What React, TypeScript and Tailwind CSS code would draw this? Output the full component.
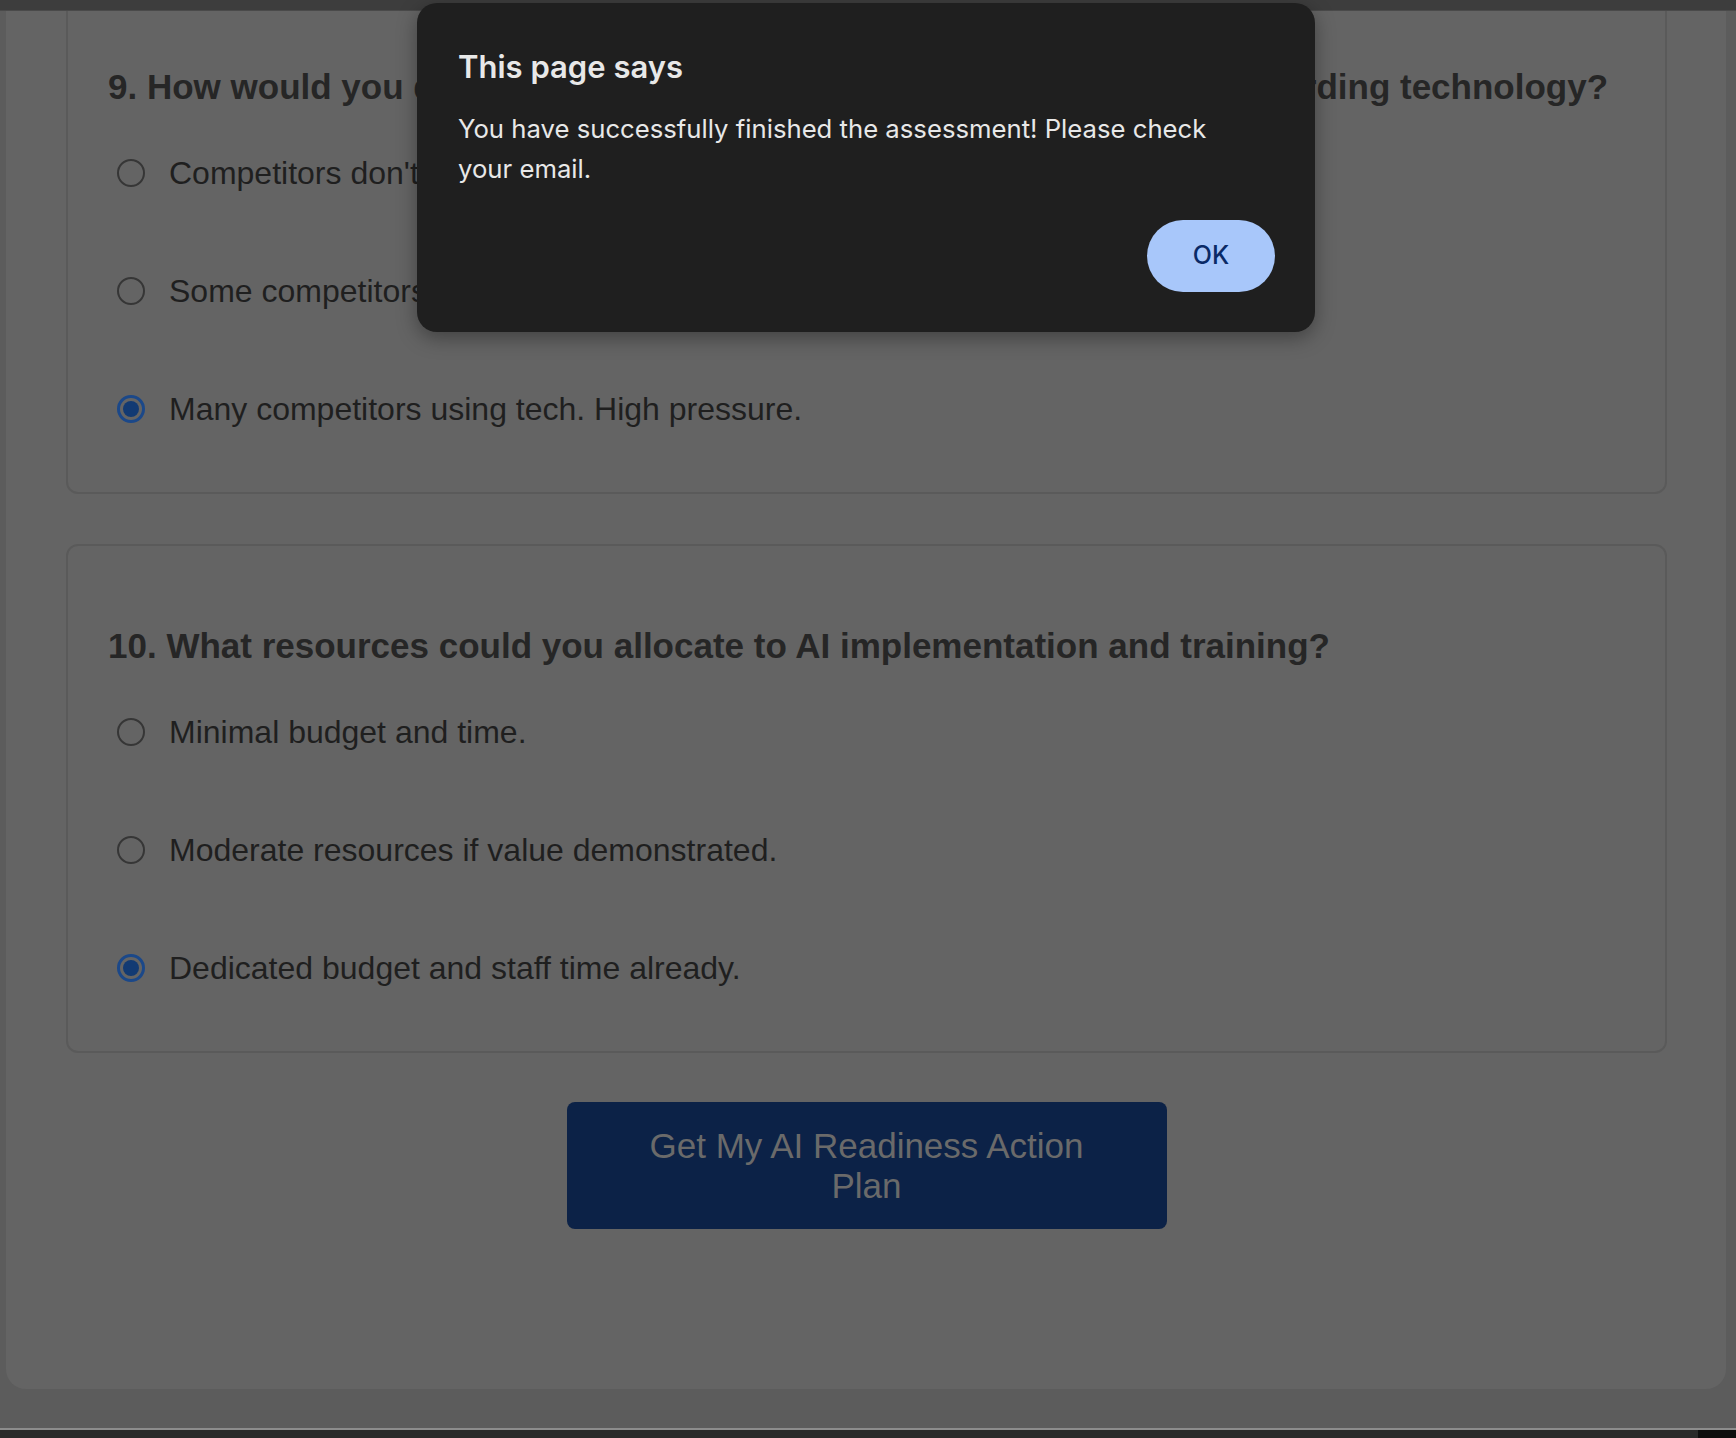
import React from "react";

interface Question {
  num: number;
  title: string;
  options: string[];
  selected: number;
}

const questions: Question[] = [
  {
    num: 9,
    title: "How would you describe your company's competitive landscape regarding technology?",
    options: [
      "Competitors don't use much technology. Low pressure.",
      "Some competitors adopting tech. Moderate pressure.",
      "Many competitors using tech. High pressure.",
    ],
    selected: 2,
  },
  {
    num: 10,
    title: "What resources could you allocate to AI implementation and training?",
    options: [
      "Minimal budget and time.",
      "Moderate resources if value demonstrated.",
      "Dedicated budget and staff time already.",
    ],
    selected: 2,
  },
];

function Radio({ checked }: { checked: boolean }) {
  if (checked) {
    return (
      <span className="ml-[9px] flex h-[28px] w-[28px] shrink-0 items-center justify-center rounded-full border-[3px] border-[#1b4889]">
        <span className="h-[16px] w-[16px] rounded-full bg-[#123a73]" />
      </span>
    );
  }
  return <span className="ml-[9px] h-[28px] w-[28px] shrink-0 rounded-full border-2 border-[#363636]" />;
}

function QuestionCard({ q, className }: { q: Question; className?: string }) {
  return (
    <div className={`rounded-[12px] border-2 border-[#5a5a5a] px-[40px] pb-[24px] ${className ?? ""}`}>
      <h3 className="whitespace-nowrap text-[35px] font-bold leading-[40px] text-[#262626]">
        {q.num}. {q.title}
      </h3>
      <div className="mt-[7px]">
        {q.options.map((opt, i) => (
          <label key={i} className="flex h-[118px] items-center gap-[24px]">
            <Radio checked={i === q.selected} />
            <span className="whitespace-nowrap text-[32px] leading-[37px] text-[#1f1f1f]">{opt}</span>
          </label>
        ))}
      </div>
    </div>
  );
}

export default function App() {
  return (
    <div className="relative h-[1438px] w-[1736px] overflow-hidden bg-[#5c5c5c] font-['Liberation_Sans',Arial,sans-serif]">
      {/* browser tab strip */}
      <div className="relative z-10 h-[10px] bg-[#3d3d3d]" />
      <div className="relative z-10 h-px bg-[#4a4a4a]" />

      {/* page panel, scrolled so its top is out of view */}
      <div className="-mt-[11px] ml-[6px] flex h-[1389px] w-[1720px] flex-col rounded-b-[20px] bg-[#646464] pl-[60px] pr-[59px]">
        <QuestionCard q={questions[0]} className="-mt-[15px] pt-[80px]" />
        <QuestionCard q={questions[1]} className="mt-[50px] pt-[80px]" />
        <div className="mt-[49px] flex justify-center">
          <button className="flex h-[127px] w-[600px] items-center justify-center rounded-[8px] bg-[#0c2247] px-[50px] text-center text-[35px] leading-[40px] text-[#6a6a6a]">
            Get My AI Readiness Action Plan
          </button>
        </div>
      </div>

      {/* window bottom edge */}
      <div className="mt-[39px] h-[2px] bg-[#8c8c8c]" />
      <div className="flex h-[8px]">
        <div className="flex-1 bg-[#2a2a2a]" />
        <div className="w-[38px] bg-[#0e0e0e]" />
      </div>

      {/* alert dialog */}
      <div className="absolute left-[417px] top-[3px] z-20 h-[329px] w-[898px] rounded-[20px] bg-[#1f1f1f] pl-[41px] pr-[40px] pt-[46px] font-['Inter',sans-serif] shadow-[0_6px_20px_rgba(0,0,0,0.35)]">
        <div className="text-[31px] font-semibold leading-[36px] text-[#e8e8e8]">This page says</div>
        <p className="mt-[24px] max-w-[770px] text-[25.7px] leading-[40px] text-[#e8e8e8]">
          You have successfully finished the assessment! Please check your email.
        </p>
        <div className="mt-[31px] flex justify-end">
          <button className="h-[72px] w-[128px] rounded-full bg-[#a8c7fa] text-[25px] font-medium text-[#0a2a66]">
            OK
          </button>
        </div>
      </div>
    </div>
  );
}
